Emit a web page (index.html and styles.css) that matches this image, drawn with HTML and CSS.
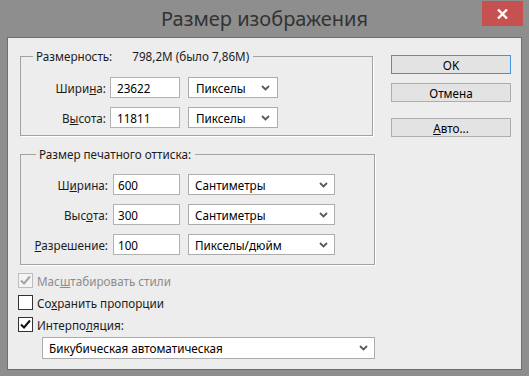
FILE: index.html
```html
<!DOCTYPE html>
<html lang="ru">
<head>
    <meta charset="UTF-8">
    <title>Размер изображения</title>
    <link rel="stylesheet" href="styles.css">
</head>
<body>
    <div class="window">
        <div class="titlebar">
            <span class="title">Размер изображения</span>
            <button class="close" title="Закрыть">
                <svg width="11" height="10" viewBox="0 0 11 10"><path d="M1 0.5 L10 9.5 M10 0.5 L1 9.5" stroke="#fff" stroke-width="2.4"/></svg>
            </button>
        </div>
        <div class="client">
            <div class="main">
                <fieldset class="group group-pixels">
                    <legend>Размерность:<span class="size-value">798,2M (было 7,86M)</span></legend>
                    <div class="row">
                        <label class="label">Шири<u>н</u>а:</label>
                        <input class="field" type="text" value="23622">
                        <div class="select"><span>Пикселы</span><svg class="chev" width="9" height="6" viewBox="0 0 9 6"><path d="M1 1 L4.5 4.5 L8 1" fill="none" stroke="#5a5a5a" stroke-width="1.8"/></svg></div>
                    </div>
                    <div class="row">
                        <label class="label">В<u>ы</u>сота:</label>
                        <input class="field" type="text" value="11811">
                        <div class="select"><span>Пикселы</span><svg class="chev" width="9" height="6" viewBox="0 0 9 6"><path d="M1 1 L4.5 4.5 L8 1" fill="none" stroke="#5a5a5a" stroke-width="1.8"/></svg></div>
                    </div>
                </fieldset>

                <fieldset class="group group-print">
                    <legend>Размер печатного оттиска:</legend>
                    <div class="row">
                        <label class="label">Ш<u>и</u>рина:</label>
                        <input class="field" type="text" value="600">
                        <div class="select"><span>Сантиметры</span><svg class="chev" width="9" height="6" viewBox="0 0 9 6"><path d="M1 1 L4.5 4.5 L8 1" fill="none" stroke="#5a5a5a" stroke-width="1.8"/></svg></div>
                    </div>
                    <div class="row">
                        <label class="label">Выс<u>о</u>та:</label>
                        <input class="field" type="text" value="300">
                        <div class="select"><span>Сантиметры</span><svg class="chev" width="9" height="6" viewBox="0 0 9 6"><path d="M1 1 L4.5 4.5 L8 1" fill="none" stroke="#5a5a5a" stroke-width="1.8"/></svg></div>
                    </div>
                    <div class="row">
                        <label class="label"><u>Р</u>азрешение:</label>
                        <input class="field" type="text" value="100">
                        <div class="select"><span>Пикселы/дюйм</span><svg class="chev" width="9" height="6" viewBox="0 0 9 6"><path d="M1 1 L4.5 4.5 L8 1" fill="none" stroke="#5a5a5a" stroke-width="1.8"/></svg></div>
                    </div>
                </fieldset>

                <div class="checks">
                    <div class="check-row disabled">
                        <span class="box"><svg width="13" height="13" viewBox="0 0 13 13"><path d="M2 6.5 L5 9.5 L11 2.5" fill="none" stroke="#a3a3a3" stroke-width="2"/></svg></span>
                        <span>Мас<u>ш</u>табировать стили</span>
                    </div>
                    <div class="check-row">
                        <span class="box"></span>
                        <span>Со<u>х</u>ранить пропорции</span>
                    </div>
                    <div class="check-row">
                        <span class="box"><svg width="13" height="13" viewBox="0 0 13 13"><path d="M2 6.5 L5 9.5 L11 2.5" fill="none" stroke="#111" stroke-width="2"/></svg></span>
                        <span>Интерпо<u>л</u>яция:</span>
                    </div>
                </div>

                <div class="select select-wide"><span>Бикубическая автоматическая</span><svg class="chev" width="9" height="6" viewBox="0 0 9 6"><path d="M1 1 L4.5 4.5 L8 1" fill="none" stroke="#5a5a5a" stroke-width="1.8"/></svg></div>
            </div>

            <div class="actions">
                <button class="btn btn-default">OK</button>
                <button class="btn">Отмена</button>
                <button class="btn btn-auto"><u>А</u>вто...</button>
            </div>
        </div>
    </div>
</body>
</html>
```

FILE: styles.css
```css
body {
    margin: 0;
    width: 529px;
    height: 376px;
    overflow: hidden;
    background: #8e8e8e;
    font-family: "Noto Sans", "Liberation Sans", sans-serif;
    font-size: 11.7px;
    color: #1c1c1c;
}
.window {
    display: flex;
    flex-direction: column;
    height: 100%;
}
.titlebar {
    height: 37px;
    display: grid;
    grid-template-columns: 1fr auto 1fr;
}
.title {
    grid-column: 2;
    align-self: center;
    font-size: 20px;
    line-height: 24px;
    color: #333;
}
.close {
    grid-column: 3;
    justify-self: end;
    align-self: start;
    width: 41px;
    height: 25px;
    margin: 1px 6px 0 0;
    padding: 0;
    border: none;
    background: #c75050;
    display: flex;
    align-items: center;
    justify-content: center;
}
.client {
    flex: 1;
    margin: 0 7px 6px;
    border: 1px solid #6e6e6e;
    background: #ededed;
    display: flex;
}
.main {
    padding: 10px 0 0 10px;
}
.group {
    margin: 0 0 0 2px;
    border: 1px solid #a2a2a2;
    box-shadow: 1px 1px 0 #fff;
    display: flex;
    flex-direction: column;
    gap: 9px;
}
.group legend {
    padding: 0 4px 0 3px;
    line-height: 16px;
}
.group-pixels {
    width: 351px;
    padding: 13px 0 7px 0;
}
.group-pixels legend {
    margin-left: 12px;
}
.size-value {
    margin-left: 20px;
}
.group-print {
    width: 353px;
    margin-top: 10px;
    padding: 12px 0 9px 0;
}
.group-print legend {
    margin-left: 15px;
}
.row {
    display: flex;
    align-items: center;
    height: 21px;
}
.label {
    text-align: right;
    white-space: nowrap;
}
.field {
    box-sizing: border-box;
    height: 21px;
    border: 1px solid #b2b2b2;
    background: #fff;
    font: inherit;
    color: #000;
    padding: 0 4px;
    outline: none;
}
.select {
    box-sizing: border-box;
    height: 21px;
    display: flex;
    align-items: center;
    justify-content: space-between;
    border: 1px solid #acacac;
    background: #fff;
    color: #000;
    margin-left: 8px;
    padding: 0 6px 0 7px;
}
.group-pixels .label {
    width: 85px;
}
.group-pixels .field {
    width: 70px;
    margin-left: 4px;
    padding-left: 6px;
}
.group-pixels .select {
    width: 90px;
    padding-right: 7px;
}
.group-print .label {
    width: 87px;
}
.group-print .field {
    width: 67px;
    margin-left: 5px;
}
.group-print .select {
    width: 147px;
    padding-left: 6px;
}
.checks {
    margin-top: 5px;
    display: flex;
    flex-direction: column;
    gap: 1px;
}
.check-row {
    height: 21px;
    display: flex;
    align-items: center;
    gap: 4px;
}
.box {
    box-sizing: border-box;
    width: 15px;
    height: 15px;
    border: 1px solid #333;
    background: #fff;
    display: flex;
    align-items: center;
    justify-content: center;
}
.disabled {
    color: #8c8c8c;
}
.disabled .box {
    border-color: #bcbcbc;
    background: #f4f4f4;
}
.select-wide {
    width: 333px;
    height: 22px;
    margin: 2px 0 0 24px;
    padding-left: 6px;
}
.actions {
    margin-left: auto;
    margin-right: 10px;
    padding-top: 17px;
    width: 120px;
    display: flex;
    flex-direction: column;
}
.btn {
    height: 19px;
    padding: 0;
    border: 1px solid #adadad;
    background: #e3e3e3;
    font: inherit;
    color: #000;
    line-height: 16px;
}
.btn-default {
    border-color: #3d95e3;
    margin-bottom: 9px;
}
.btn-auto {
    margin-top: 16px;
}
```
